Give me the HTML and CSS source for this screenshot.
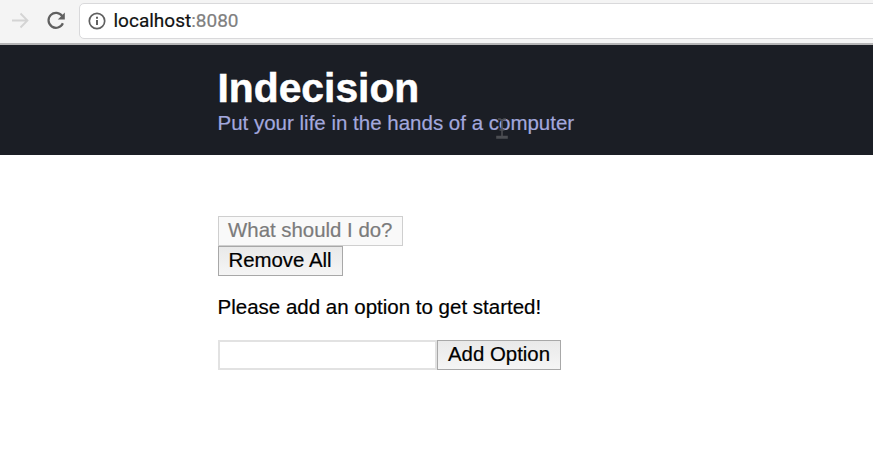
FILE: index.html
```html
<!DOCTYPE html>
<html lang="en">
<head>
<meta charset="utf-8">
<title>Indecision</title>
<link rel="stylesheet" href="styles.css">
</head>
<body>
<div class="toolbar">
  <svg class="nav-icons" width="79" height="44" viewBox="0 0 79 44" fill="none">
    <path d="M12 20.5H27M20.5 13.5L27.5 20.5L20.5 27.5" stroke="#d4d4d4" stroke-width="1.8"/>
    <path d="M62.3 16.2A7.5 7.5 0 1 0 62.9 23.3" stroke="#606060" stroke-width="2.2"/>
    <path d="M64.8 12.5V19.5H57.8Z" fill="#606060"/>
  </svg>
  <div class="address">
    <svg class="info" width="18" height="18" viewBox="0 0 18 18" fill="none">
      <circle cx="9" cy="9" r="7.7" stroke="#606060" stroke-width="1.7"/>
      <path d="M9 8V13M9 4.8V6.7" stroke="#606060" stroke-width="2"/>
    </svg>
    <span class="url">localhost<span class="port">:8080</span></span>
  </div>
</div>
<header class="header">
  <h1 class="title">Indecision</h1>
  <h2 class="subtitle">Put your life in the hands of a computer</h2>
  <svg class="cursor" width="14" height="24" viewBox="0 0 14 24" fill="none">
    <path d="M3 3H5L7 4.5L9 3H11M7 4V21M4.5 14H9.5M2 22V20.5H12V22Z" stroke="#4b4d52" stroke-width="1.6"/>
  </svg>
</header>
<main class="content">
  <button class="button decide" disabled>What should I do?</button>
  <button class="button remove">Remove All</button>
  <p class="message">Please add an option to get started!</p>
  <form class="form">
    <input class="option" type="text" aria-label="Option">
    <button class="button add" type="button">Add Option</button>
  </form>
</main>
</body>
</html>
```
FILE: styles.css
```css
* { box-sizing: border-box; }
body {
  margin: 0;
  height: 462px;
  overflow: hidden;
  background: #fff;
  color: #000;
  font: 20.5px/24px "Liberation Sans", Arial, sans-serif;
}
.toolbar {
  display: flex;
  height: 45px;
  background: #f4f4f4;
  border-bottom: 2px solid #b5b5b6;
  overflow: hidden;
}
.nav-icons { flex: none; }
.address {
  display: flex;
  align-items: center;
  flex: 1;
  height: 36px;
  margin: 3px -6px 0 0;
  padding-left: 8px;
  background: #fff;
  border: 1.5px solid #d9d9db;
  border-radius: 5px;
}
.info { flex: none; }
.url {
  margin-left: 7.5px;
  font: 19px/24px Roboto, sans-serif;
  color: #111;
  -webkit-text-stroke: 0.2px;
}
.port { color: #808080; }
.header {
  position: relative;
  height: 110px;
  padding: 20px 0 0 217.5px;
  background: #1b1e25;
}
.title {
  margin: 0;
  color: #fff;
  font-size: 40.8px;
  line-height: 46px;
  -webkit-text-stroke: 0.5px;
}
.subtitle {
  margin: 0;
  color: #a3a8de;
  font-size: 20.5px;
  line-height: 24px;
  font-weight: 400;
  -webkit-text-stroke: 0.2px;
}
.cursor {
  position: absolute;
  left: 495px;
  top: 71px;
}
.content {
  display: flex;
  flex-direction: column;
  align-items: flex-start;
  padding: 61px 0 0 217.5px;
}
.button {
  height: 30px;
  padding: 0 0 2px;
  border: 1.5px solid #a8a8a8;
  background: linear-gradient(#e9e9e9, #f5f5f5);
  color: #000;
  font: 20.4px/24px "Liberation Sans", Arial, sans-serif;
  white-space: nowrap;
  -webkit-text-stroke: 0.2px;
}
.decide {
  width: 185.5px;
  border-color: #cfcfcf;
  background: #f9f9f9;
  color: #7b7b7b;
}
.remove { width: 125px; }
.message {
  margin: 19px 0 21px;
  -webkit-text-stroke: 0.2px;
}
.form { display: flex; margin: 0; }
.option {
  width: 219.5px;
  height: 30px;
  border: 2px solid #e2e2e2;
  background: #fff;
}
.add { width: 124px; }
```
